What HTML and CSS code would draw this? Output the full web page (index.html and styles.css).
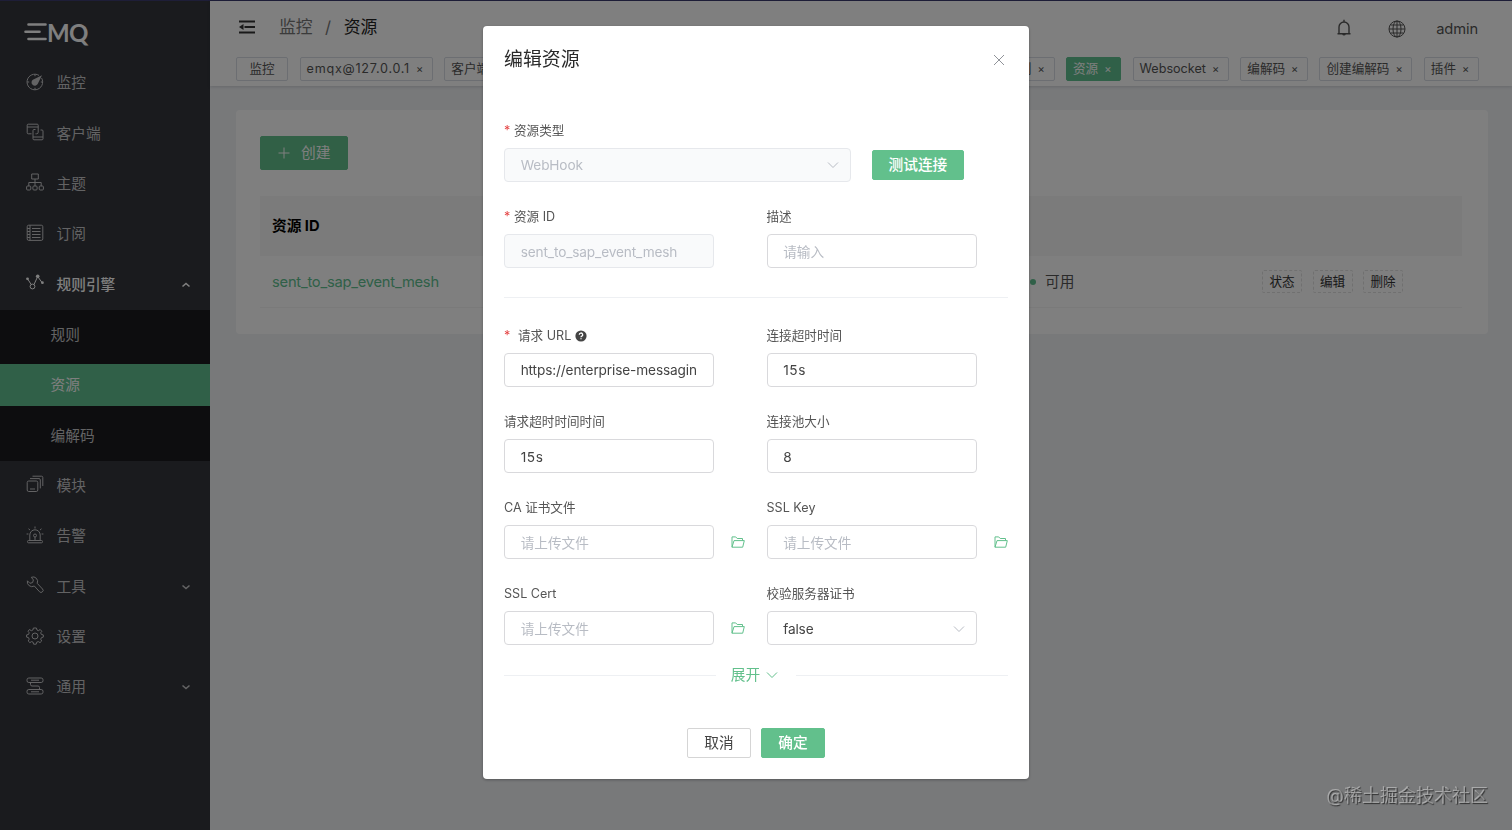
FILE: index.html
```html
<!DOCTYPE html>
<html lang="zh-CN">
<head>
    <meta charset="UTF-8">
    <meta name="viewport" content="width=device-width, initial-scale=1.0">
    <title>EMQ - 资源</title>
    <link rel="stylesheet" href="styles.css">
</head>
<body>
    <div class="app">
        <div class="sidebar">
            <div class="logo">
                <svg width="23" height="20" viewBox="0 0 23 20"><path d="M4.500 2.500h17M1.500 9.700h14M4.500 17h17"/></svg>
                <span>MQ</span>
            </div>
            <ul class="menu">
                <li><svg class="icon" viewBox="0 0 18 18"><path d="M13 2.400a7.800 7.800 0 1 0 2.600 2.700M9 1.200v2M1.200 9h2M14.800 9h2M9 14.800v2"/><path class="fill" d="M16 2.300 11.700 11a3.300 3.300 0 1 1-4.800-4.300z"/></svg>监控</li>
                <li><svg class="icon" viewBox="0 0 18 18"><path d="M5.500 10.800H2.200a1 1 0 0 1-1-1V2.200a1 1 0 0 1 1-1h9a1 1 0 0 1 1 1v7a1.600 1.600 0 0 1-1.600 1.600H9.500M1.200 4h11M9.500 6.500H8a1 1 0 0 0-1 1v8.300a1 1 0 0 0 1 1h8a1 1 0 0 0 1-1V8a1 1 0 0 0-1-1h-1.500M7 14h10"/></svg>客户端</li>
                <li><svg class="icon" viewBox="0 0 18 18"><path d="M5.700 1h6.600v5H5.700zM9 6v7M2.800 13V9.500h12.400V13"/><rect x=".6" y="13" width="4.200" height="4" rx="1"/><rect x="6.900" y="13" width="4.200" height="4" rx="1"/><rect x="13.200" y="13" width="4.200" height="4" rx="1"/></svg>主题</li>
                <li><svg class="icon" viewBox="0 0 18 18"><rect x="1.200" y="1.200" width="15.600" height="15.200" rx="1.500"/><path d="M4 1.200v15.200M6 4.500h8.500M6 7.500h8.500M6 10.500h8.500M6 13.500h8.500M1.200 4.500H4M1.200 7.500H4M1.200 10.500H4M1.200 13.500H4"/></svg>订阅</li>
                <li class="open"><svg class="icon" viewBox="0 0 18 18"><path d="m1.800 5.200 3.200 5M8 10.500l3.700-8 5 7"/><circle cx="6.500" cy="12.500" r="2.400"/><circle class="fill" cx="1.500" cy="4.800" r="1.400"/><circle class="fill" cx="11.700" cy="2.200" r="1.800"/><circle class="fill" cx="16.400" cy="8.700" r="1.400"/></svg>规则引擎<svg class="arrow" viewBox="0 0 10 10"><path d="m1.500 6.500 3.500-3 3.500 3"/></svg></li>
            </ul>
            <ul class="submenu">
                <li>规则</li>
                <li class="active">资源</li>
                <li>编解码</li>
            </ul>
            <ul class="menu">
                <li><svg class="icon" viewBox="0 0 18 18"><rect x="1.200" y="6" width="10.600" height="10.500" rx="1.500"/><path d="M4 3.600h9a1.300 1.300 0 0 1 1.300 1.300v8.500M6.500 1.200h9a1.300 1.300 0 0 1 1.300 1.300V11M4 14h5"/></svg>模块</li>
                <li><svg class="icon" viewBox="0 0 18 18"><rect x="1.500" y="14.500" width="15" height="2.300" rx="1"/><path d="M3.800 14.500V9a5.200 5.200 0 0 1 10.400 0v5.500M9 .5v2M2.500 2.800 4 4M15.500 2.800 14 4M.6 8h1.800M15.600 8h1.800M9 11v3.500"/><circle cx="9" cy="9.500" r="1.500"/></svg>告警</li>
                <li><svg class="icon" viewBox="0 0 18 18"><path d="M5.300 1.300a4.500 4.500 0 0 1 5.900 6L16.500 13a1.900 1.900 0 0 1-.2 2.900 1.900 1.900 0 0 1-2.700-.1L8.300 10A4.700 4.700 0 0 1 1.400 4.800l2.500 2.500 2.700-.7.800-2.700z"/></svg>工具<svg class="arrow" viewBox="0 0 10 10"><path d="m1.500 3.500 3.500 3 3.500-3"/></svg></li>
                <li><svg class="icon" viewBox="0 0 18 18"><path d="m7.400 1-.5 2-1.500.7-2-1.200-1.300 1.800 1.100 1.500-.6 1.600-2 .5v2.200l2 .6.6 1.500-1 1.800 1.700 1.600 1.700-1 1.500.6.500 2h2.600l.5-2 1.600-.6 1.700 1 1.700-1.600-1-1.800.7-1.500 1.900-.6V7.900l-2-.5-.6-1.600 1.100-1.500-1.600-1.800-1.900 1.200L11 3l-.6-2z"/><circle cx="9" cy="9" r="3"/></svg>设置</li>
                <li><svg class="icon" viewBox="0 0 18 18"><rect x="1" y="1" width="16" height="4.500" rx="1.800"/><rect x="1" y="12.500" width="16" height="4.500" rx="1.800"/><path d="M5 3.200h8M5 14.800h8M4.500 5.500v2A1.500 1.500 0 0 0 6 9h6a1.500 1.500 0 0 1 1.500 1.500v2"/></svg>通用<svg class="arrow" viewBox="0 0 10 10"><path d="m1.500 3.500 3.500 3 3.500-3"/></svg></li>
            </ul>
        </div>

        <div class="main">
            <div class="topbar">
                <div class="nav">
                    <svg class="fold" viewBox="0 0 16 14"><path d="M0 1.500h16M5.500 7H16M0 12.500h16"/><path class="tip" d="M0 7l4.500-3v6z"/></svg>
                    <div class="breadcrumb"><span>监控</span><i>/</i><b>资源</b></div>
                    <div class="nav-right">
                        <svg class="bell" viewBox="0 0 16 18"><path d="M1.500 14.700h13M3 14.500V8a5 5 0 0 1 10 0v6.500M8 3V.8M6.700 15a1.400 1.400 0 0 0 2.600 0"/></svg>
                        <svg class="globe" viewBox="0 0 18 18"><circle cx="9" cy="9" r="8"/><ellipse cx="9" cy="9" rx="4" ry="8"/><path d="M9 1v16M1 9h16M2.500 5h13M2.500 13h13"/></svg>
                        <span>admin</span>
                    </div>
                </div>
                <div class="tabs">
                    <div class="tab home">监控</div>
                    <div class="tab node">emqx@127.0.0.1<em>×</em></div>
                    <div class="tab">客户端<em>×</em></div>
                    <div class="tab push">规则<em>×</em></div>
                    <div class="tab active">资源<em>×</em></div>
                    <div class="tab">Websocket<em>×</em></div>
                    <div class="tab">编解码<em>×</em></div>
                    <div class="tab">创建编解码<em>×</em></div>
                    <div class="tab">插件<em>×</em></div>
                </div>
            </div>
            <div class="card">
                <button class="btn primary create"><svg viewBox="0 0 12 12"><path d="M6 .5v11M.5 6h11"/></svg>创建</button>
                <div class="table-head">资源 ID</div>
                <div class="table-row">
                    <a>sent_to_sap_event_mesh</a>
                    <div class="status">可用</div>
                    <div class="actions">
                        <button>状态</button>
                        <button>编辑</button>
                        <button>删除</button>
                    </div>
                </div>
            </div>
        </div>
    </div>

    <div class="mask">
        <div class="dialog">
            <div class="dialog-header">
                <h3>编辑资源</h3>
                <svg class="close" viewBox="0 0 12 12"><path d="m1 1 10 10M11 1 1 11"/></svg>
            </div>
            <div class="form">
                <div class="field wide">
                    <label class="required">资源类型</label>
                    <div class="type-row">
                        <div class="select disabled">WebHook<svg viewBox="0 0 12 12"><path d="m1 3.500 5 5 5-5"/></svg></div>
                        <button class="btn primary">测试连接</button>
                    </div>
                </div>
                <div class="field">
                    <label class="required">资源 ID</label>
                    <input type="text" value="sent_to_sap_event_mesh" disabled>
                </div>
                <div class="field">
                    <label>描述</label>
                    <input type="text" placeholder="请输入">
                </div>
            </div>
            <div class="divider"></div>
            <div class="form">
                <div class="field">
                    <label class="required tip">请求 URL<svg viewBox="0 0 12 12"><circle cx="6" cy="6" r="5.600"/><path d="M4.300 4.700a1.700 1.700 0 1 1 2.500 1.500c-.6.300-.8.500-.8 1M6 8.200v1.100"/></svg></label>
                    <input type="text" value="https://enterprise-messagin">
                </div>
                <div class="field">
                    <label>连接超时时间</label>
                    <input class="num" type="text" value="15s">
                </div>
                <div class="field">
                    <label>请求超时时间时间</label>
                    <input class="num" type="text" value="15s">
                </div>
                <div class="field">
                    <label>连接池大小</label>
                    <input type="text" value="8">
                </div>
                <div class="field">
                    <label>CA 证书文件</label>
                    <input type="text" placeholder="请上传文件">
                    <svg class="folder" viewBox="0 0 14 12"><path d="M1 11.200V.9h3.700l1.500 1.600h5.300v2M1 11.200 3 4.600h10.300l-1.600 6.600z"/></svg>
                </div>
                <div class="field">
                    <label>SSL Key</label>
                    <input type="text" placeholder="请上传文件">
                    <svg class="folder" viewBox="0 0 14 12"><path d="M1 11.200V.9h3.700l1.500 1.600h5.300v2M1 11.200 3 4.600h10.300l-1.600 6.600z"/></svg>
                </div>
                <div class="field">
                    <label>SSL Cert</label>
                    <input type="text" placeholder="请上传文件">
                    <svg class="folder" viewBox="0 0 14 12"><path d="M1 11.200V.9h3.700l1.500 1.600h5.300v2M1 11.200 3 4.600h10.300l-1.600 6.600z"/></svg>
                </div>
                <div class="field">
                    <label>校验服务器证书</label>
                    <div class="select">false<svg viewBox="0 0 12 12"><path d="m1 3.500 5 5 5-5"/></svg></div>
                </div>
            </div>
            <div class="expand"><span>展开<svg viewBox="0 0 12 12"><path d="m1 3.500 5 5 5-5"/></svg></span></div>
            <div class="dialog-footer">
                <button class="btn">取消</button>
                <button class="btn primary">确定</button>
            </div>
        </div>
    </div>
    <div class="watermark">@稀土掘金技术社区</div>
</body>
</html>
```
FILE: styles.css
```css
* { box-sizing: border-box; }
body { margin: 0; height: 830px; overflow: hidden; font-family: Inter, "Noto Sans CJK SC", sans-serif; font-size: 14.7px; color: #555; }
ul { list-style: none; margin: 0; padding: 0; }
svg { fill: none; stroke: currentColor; flex: none; }
button, input { font-family: inherit; }

.app { display: flex; height: 830px; border-top: 1px solid #3c3c70; }

/* sidebar */
.sidebar { width: 210px; background-color: #34363c; color: #c6c6c8; }
.logo { display: flex; align-items: center; height: 57px; padding: 5px 0 0 24px; color: #fff; font-family: Lato, sans-serif; font-size: 24px; font-weight: bold; letter-spacing: -0.7px; }
.logo svg { stroke-width: 2.6; stroke-linecap: round; }
.menu li { display: flex; align-items: center; height: 50.4px; padding: 0 19px 0 26px; line-height: 20px; }
.menu .icon { width: 18px; height: 18px; margin: -3px 12.5px 0 0; }
.menu .open { color: #fff; font-weight: 500; }
.icon .fill { fill: currentColor; stroke: none; }
.arrow { width: 10px; height: 10px; margin-left: auto; stroke-width: 1.6; }
.submenu { background-color: #1a1b1e; padding: 4px 0 4px; }
.submenu li { height: 42px; margin-bottom: 8.4px; padding-left: 50.500px; line-height: 42px; }
.submenu li:last-child { margin-bottom: 0; }
.submenu .active { background-color: #60c190; color: #fff; }

/* header */
.main { flex: 1; background-color: #f0f2f5; }
.topbar { height: 85px; background-color: #fff; box-shadow: 0 1px 3px rgba(0, 21, 41, 0.15); }
.nav { display: flex; align-items: center; height: 56px; padding: 0 34px 0 29px; }
.fold { width: 16px; height: 14px; margin-top: -4px; stroke-width: 2.2; color: #333; }
.fold .tip { fill: currentColor; stroke: none; }
.breadcrumb { margin: -6px 0 0 24px; font-size: 16.8px; color: #777; }
.breadcrumb i { margin: 0 12.5px; font-style: normal; }
.breadcrumb b { font-weight: normal; color: #222; }
.nav-right { display: flex; align-items: center; margin-left: auto; }
.nav-right span { letter-spacing: -0.1px; }
.bell { width: 16px; height: 18px; margin-top: -2px; stroke-width: 1.4; }
.globe { width: 18px; height: 18px; margin: 0 30px 0 36px; }
.tabs { display: flex; gap: 11.4px; padding: 0 33px 0 26px; }
.tab { display: flex; align-items: center; height: 24px; padding: 0 6px; border: 1px solid #d8dce5; border-radius: 2px; font-size: 12.6px; line-height: 18px; white-space: nowrap; }
.tab.home { padding: 0 12.5px; }
.tab.node { letter-spacing: 0.74px; }
.tab.push { margin-left: auto; }
.tab.active { background-color: #60c190; border-color: #60c190; color: #fff; }
.tab em { width: 7px; margin: 0 3px 0 6px; font-style: normal; font-size: 11px; }

/* resource list */
.card { height: 224px; margin: 24px 24px 0 26px; padding: 26px 26px 0 24px; background-color: #fff; border-radius: 4px; }
.btn { height: 30px; padding: 0 16px; border: 1px solid #d5d5d5; border-radius: 2px; background-color: #fff; color: #444; font-size: 14.7px; line-height: 1; }
.btn.primary { border-color: #62c08c; background-color: #62c08c; color: #fff; font-weight: 500; }
.btn.create { display: flex; align-items: center; height: 34px; padding: 0 17px; font-weight: normal; }
.create svg { width: 12px; height: 12px; margin-right: 11px; }
.table-head { height: 60px; margin-top: 26px; padding-left: 12px; background-color: #f7f7f7; line-height: 60px; font-weight: bold; color: #000; }
.table-row { display: flex; align-items: center; height: 52px; padding: 0 59px 0 12px; border-bottom: 1px solid #f4f4f4; line-height: 20px; }
.table-row a { width: 758px; letter-spacing: -0.22px; color: #60c190; }
.status { display: flex; align-items: center; }
.status::before { content: ""; width: 6px; height: 6px; margin-right: 9px; border-radius: 50%; background-color: #60c190; }
.actions { display: flex; gap: 10.5px; margin-left: auto; }
.actions button { width: 40px; height: 23px; padding: 0; border: 1px dashed #e0e0e0; border-radius: 2px; background: none; color: #333; font-size: 12.6px; line-height: 18px; }

/* dialog */
.mask { position: fixed; inset: 0; background-color: rgba(0, 0, 0, 0.5); }
.dialog { width: 546px; height: 753px; margin: 26px 0 0 483px; padding: 0 21px; border-radius: 4px; background-color: #fff; box-shadow: 0 1px 3px rgba(0, 0, 0, 0.3); }
.dialog-header { display: flex; justify-content: space-between; height: 88px; padding-right: 3px; }
.dialog-header h3 { margin: 0; font-size: 18.9px; font-weight: normal; line-height: 68px; color: #2a2a2a; }
.close { width: 12px; height: 12px; margin-top: 28px; color: #909399; }
.form { display: grid; grid-template-columns: 210px 210px; column-gap: 52.5px; }
.field { position: relative; height: 86.1px; }
.field.wide { grid-column: 1 / 3; }
.field label { display: flex; align-items: center; height: 34.2px; padding-bottom: 1px; font-size: 12.6px; line-height: 18px; }
.field .required::before { content: "*"; width: 10px; color: #e54545; }
.field .required.tip::before { width: 14px; }
.tip svg { width: 12px; height: 12px; margin-left: 4px; }
.tip circle { fill: #444; stroke: none; }
.tip path { stroke: #fff; stroke-width: 1.3; }
.field input, .select { display: block; width: 210px; height: 33.6px; padding: 1px 14px 0 15.7px; border: 1px solid #d9d9dc; border-radius: 4px; background-color: #fff; font-size: 13.65px; letter-spacing: -0.13px; color: #444; }
.field input.num { letter-spacing: 0.6px; }
.field input::placeholder { letter-spacing: 0; color: #b8bcc4; }
.field input:disabled, .select.disabled { background-color: #f9fafb; border-color: #e6e8ec; color: #b8bcc4; }
.select { display: flex; align-items: center; justify-content: space-between; padding-right: 11px; }
.select svg { width: 12px; height: 12px; color: #b8bcc4; }
.type-row { display: flex; align-items: center; gap: 21px; }
.type-row .select { width: 346.5px; }
.folder { position: absolute; left: 227px; top: 45px; width: 14px; height: 12px; color: #62c08c; }
.divider { height: 1px; margin: 10.8px 0 21px; background-color: #eef0f3; }
.expand { display: flex; align-items: center; height: 24px; line-height: 20px; color: #62c08c; }
.expand::before, .expand::after { content: ""; flex: 1; height: 1px; background-color: #eef0f3; }
.expand span { display: flex; align-items: center; padding: 0 18px 0 15px; }
.expand svg { width: 12px; height: 12px; margin-left: 6px; }
.dialog-footer { display: flex; justify-content: center; gap: 10.5px; margin-top: 41px; }

.watermark { position: fixed; right: 24px; bottom: 21px; font-size: 18px; line-height: 26px; color: rgba(255, 255, 255, 0.4); text-shadow: 1px 1px 1px rgba(0, 0, 0, 0.6); }
```
